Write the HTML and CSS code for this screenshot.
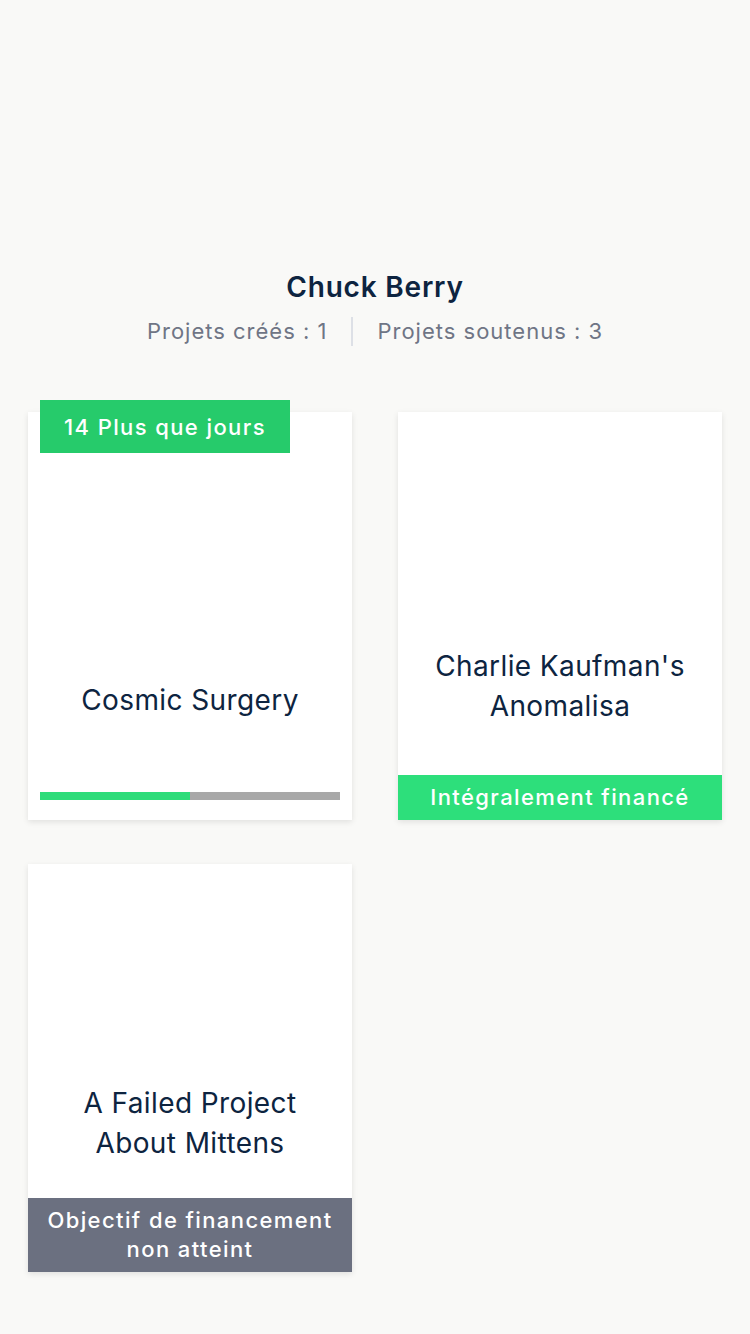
FILE: index.html
```html
<!DOCTYPE html>
<html lang="fr">
<head>
<meta charset="utf-8">
<link rel="stylesheet" href="styles.css">
</head>
<body>
<div class="page">
  <header class="profile">
    <h1 class="name">Chuck Berry</h1>
    <div class="stats">
      <span class="stat">Projets créés : 1</span>
      <span class="sep"></span>
      <span class="stat">Projets soutenus : 3</span>
    </div>
  </header>
  <main class="grid">
    <div class="card">
      <div class="badge">14 Plus que jours</div>
      <div class="media"></div>
      <div class="title title-pad">Cosmic Surgery</div>
      <div class="progress-wrap">
        <div class="progress"><div class="progress-fill" style="width:50%"></div></div>
      </div>
    </div>
    <div class="card">
      <div class="media"></div>
      <div class="title">Charlie Kaufman's<br>Anomalisa</div>
      <div class="status status-funded">Intégralement financé</div>
    </div>
    <div class="card">
      <div class="media"></div>
      <div class="title">A Failed Project<br>About Mittens</div>
      <div class="status status-failed">Objectif de financement<br>non atteint</div>
    </div>
  </main>
</div>
</body>
</html>
```
FILE: styles.css
```css
* { box-sizing: border-box; }
html, body { margin: 0; padding: 0; }
body {
  background: #f9f9f7;
  font-family: Inter, "Noto Sans", sans-serif;
  width: 750px;
  height: 1334px;
  overflow: hidden;
}
.page {
  padding-top: 268px;
}
.profile {
  display: flex;
  flex-direction: column;
  align-items: center;
}
.name {
  margin: 0;
  font-size: 28px;
  font-weight: 600;
  letter-spacing: 0.8px;
  color: #0d2440;
  line-height: 38px;
}
.stats {
  display: flex;
  align-items: center;
  margin-top: 10px;
  color: #6f7585;
  font-size: 22px;
  line-height: 30px;
  letter-spacing: 1px;
}
.sep {
  width: 2px;
  height: 29px;
  background: #dde0e6;
  margin: 0 24px;
}
.grid {
  display: grid;
  grid-template-columns: 324px 324px;
  column-gap: 46px;
  row-gap: 44px;
  padding: 0 28px;
  margin-top: 66px;
}
.card {
  position: relative;
  background: #fff;
  height: 408px;
  display: flex;
  flex-direction: column;
  box-shadow: 0 2px 6px rgba(0,0,0,0.10);
}
.badge {
  position: absolute;
  left: 12px;
  top: -12px;
  height: 53px;
  padding: 0 24px;
  display: flex;
  align-items: center;
  background: #26cb6b;
  color: #fff;
  font-size: 22px;
  font-weight: 500;
  letter-spacing: 1.4px;
}
.media {
  height: 184px;
  flex: none;
}
.title {
  flex: 1;
  display: flex;
  align-items: center;
  justify-content: center;
  text-align: center;
  color: #0d2440;
  font-size: 28px;
  line-height: 40px;
  letter-spacing: 0.4px;
}
.title-pad { padding-top: 12px; }
.progress-wrap {
  padding: 0 12px 20px;
}
.progress {
  height: 8px;
  background: #a8a8a8;
}
.progress-fill {
  height: 100%;
  background: #2edc7a;
}
.status {
  color: #fff;
  text-align: center;
  font-size: 22px;
  font-weight: 500;
  letter-spacing: 1.4px;
}
.status-funded {
  background: #2ddf7b;
  height: 45px;
  line-height: 45px;
}
.status-failed {
  background: #6b7080;
  height: 74px;
  line-height: 29px;
  padding-top: 8px;
}
```
